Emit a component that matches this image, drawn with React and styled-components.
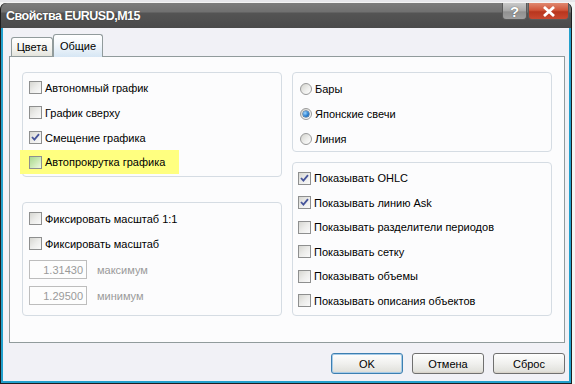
import React from "react";
import styled, { createGlobalStyle } from "styled-components";

const Global = createGlobalStyle`
  html, body { margin: 0; padding: 0; background: #f4f4f4; }
  body { font-family: "Liberation Sans", Arial, sans-serif; font-size: 11px; color: #000; }
`;

const Page = styled.div`
  width: 575px;
  height: 384px;
  padding-top: 1px;
  box-sizing: border-box;
  background: #f4f4f4;
  border-top: 2px solid #e6e6ea;
  overflow: hidden;
`;

const Window = styled.div`
  width: 572px;
  height: 381px;
  display: flex;
  flex-direction: column;
  background: #2b2b2b;
  box-sizing: border-box;
  border: 1px solid #1e1e1e;
  border-top: none;
  border-radius: 6px 6px 0 0;
`;

const TitleBar = styled.div`
  height: 25px;
  flex: none;
  display: flex;
  align-items: flex-start;
  justify-content: space-between;
  padding-left: 5px;
  border-radius: 6px 6px 0 0;
  background: linear-gradient(#7c7c7c 0%, #707070 36%, #545454 40%, #4a4a4a 100%);
`;

const Title = styled.div`
  color: #fff;
  font-weight: bold;
  font-size: 12.5px;
  letter-spacing: -0.5px;
  line-height: 13px;
  margin-top: 7px;
  text-shadow: 0 0 1px rgba(0, 0, 0, 0.4);
`;

const Caps = styled.div`
  display: flex;
  gap: 1px;
  margin-right: 2px;
`;

const CapButton = styled.div`
  height: 17px;
  width: ${(p) => p.$w}px;
  box-sizing: border-box;
  border: 1px solid #5a5a5a;
  border-top: none;
  border-radius: 0 0 4px 4px;
  display: flex;
  align-items: center;
  justify-content: center;
  color: #fff;
  font-weight: bold;
  font-size: 15px;
  background: ${(p) =>
    p.$red
      ? "linear-gradient(#e08870 0%, #d0553a 45%, #b8361e 55%, #c84830 100%)"
      : "linear-gradient(#c9c9c9 0%, #a8a8a8 50%, #909090 55%, #a0a0a0 100%)"};
  text-shadow: 0 0 1px #333;
`;

const Client = styled.div`
  flex: 1;
  display: flex;
  flex-direction: column;
  background: #f1f1f6;
  border: 2px solid #22a0cc;
  border-top: none;
  padding: 6px 3px 0 6px;
`;

const Tabs = styled.div`
  display: flex;
  align-items: flex-end;
  height: 22px;
  padding-left: 2px;
  position: relative;
  z-index: 1;
`;

const Tab = styled.div`
  height: ${(p) => (p.$active ? 23 : 19)}px;
  width: ${(p) => p.$w}px;
  justify-content: center;
  box-sizing: border-box;
  display: flex;
  align-items: center;
  font-size: 11px;
  border: 1px solid #919b9c;
  border-bottom: none;
  border-radius: 3px 3px 0 0;
  margin-bottom: ${(p) => (p.$active ? -1 : 0)}px;
  background: ${(p) =>
    p.$active
      ? "linear-gradient(#ffffff 0%, #f4f8fc 40%, #d6e6f4 100%)"
      : "linear-gradient(#ffffff 0%, #f3f3ef 60%, #e3e3dc 100%)"};
`;

const Panel = styled.div`
  height: 287px;
  box-sizing: border-box;
  border: 1px solid #919b9c;
  background: #fcfcfd;
  padding: 15px 12px 0 12px;
  display: grid;
  grid-template-columns: 260px 260px;
  column-gap: 10px;
  margin-right: 1px;
`;

const Column = styled.div`
  display: flex;
  flex-direction: column;
  gap: ${(p) => p.$gap}px;
`;

const Group = styled.div`
  height: ${(p) => p.$h}px;
  box-sizing: border-box;
  border: 1px solid #d5dce3;
  border-radius: 4px;
  padding: ${(p) => p.$pt}px 0 0 ${(p) => p.$pl}px;
  display: flex;
  flex-direction: column;
`;

const Row = styled.div`
  height: ${(p) => p.$h || 25}px;
  display: flex;
  align-items: center;
  gap: 3px;
  flex: none;
`;

const Highlight = styled(Row)`
  background: #ffff80;
  width: 150px;
  height: 24px;
  margin-left: -9px;
  padding-left: 9px;
  position: relative;
`;

const Box = styled.span`
  width: 13px;
  height: 13px;
  box-sizing: border-box;
  flex: none;
  border: 1px solid #8e8f8f;
  display: flex;
  align-items: center;
  justify-content: center;
  background: ${(p) =>
    p.$hover
      ? "linear-gradient(135deg, #a9d88f 0%, #cbe9b4 50%, #eef8e2 100%)"
      : "linear-gradient(135deg, #d6d6d1 0%, #ececea 50%, #fafafa 100%)"};
`;

const RadioDot = styled.span`
  width: 12px;
  height: 12px;
  box-sizing: border-box;
  border-radius: 50%;
  flex: none;
  border: 1px solid #9a9a9a;
  display: flex;
  align-items: center;
  justify-content: center;
  background: linear-gradient(135deg, #d2d2cc 0%, #eeeeec 55%, #ffffff 100%);
`;

const Dot = styled.span`
  width: 6px;
  height: 6px;
  border-radius: 50%;
  background: radial-gradient(circle at 35% 35%, #9fd6ff 0%, #2a7fd0 55%, #0d4f98 100%);
  box-shadow: 0 0 0 0.5px #1b4b80;
`;

const Label = styled.span`
  white-space: nowrap;
  color: ${(p) => (p.$dim ? "#9a9a9a" : "#000")};
`;

const Field = styled.div`
  width: 58px;
  height: 19px;
  box-sizing: border-box;
  border: 1px solid #bdbdbd;
  background: #fdfdfd;
  color: #9a9a9a;
  display: flex;
  align-items: center;
  justify-content: flex-end;
  padding-right: 3px;
  flex: none;
`;

const FieldRow = styled.div`
  height: 19px;
  display: flex;
  align-items: center;
  gap: 10px;
  margin-top: ${(p) => p.$mt}px;
`;

const Footer = styled.div`
  display: flex;
  justify-content: flex-end;
  gap: 9px;
  padding: 10px 1px 0 0;
`;

const Button = styled.div`
  width: 72px;
  height: 21px;
  box-sizing: border-box;
  border: 1px solid ${(p) => (p.$focus ? "#3c7fb1" : "#707070")};
  border-radius: 3px;
  display: flex;
  align-items: center;
  justify-content: center;
  font-size: 11px;
  background: linear-gradient(#fefefe 0%, #f0f0ee 50%, #e2e2dd 90%, #d6d0c5 100%);
  box-shadow: ${(p) => (p.$focus ? "inset 0 0 0 1px #a6cbe8" : "none")};
`;

const Check = ({ on, hover }) => (
  <Box $hover={hover}>
    {on && (
      <svg width="9" height="9" viewBox="0 0 9 9">
        <path d="M1 4 L3.4 6.6 L8 1.2" fill="none" stroke="#46549a" strokeWidth="1.8" />
      </svg>
    )}
  </Box>
);

const Radio = ({ on }) => <RadioDot>{on && <Dot />}</RadioDot>;

const chartItems = [
  { label: "Автономный график" },
  { label: "График сверху" },
  { label: "Смещение графика", on: true },
];

const showItems = [
  { label: "Показывать OHLC", on: true },
  { label: "Показывать линию Ask", on: true },
  { label: "Показывать разделители периодов" },
  { label: "Показывать сетку" },
  { label: "Показывать объемы" },
  { label: "Показывать описания объектов" },
];

const types = [
  { label: "Бары" },
  { label: "Японские свечи", on: true },
  { label: "Линия" },
];

export default function App() {
  return (
    <Page>
      <Global />
      <Window>
        <TitleBar>
          <Title>Свойства EURUSD,M15</Title>
          <Caps>
            <CapButton $w={25}>?</CapButton>
            <CapButton $w={41} $red>
              <svg width="14" height="11" viewBox="0 0 14 11">
                <path d="M2 1 L12 10 M12 1 L2 10" stroke="#fff" strokeWidth="2.8" />
              </svg>
            </CapButton>
          </Caps>
        </TitleBar>
        <Client>
          <Tabs>
            <Tab $w={42}>Цвета</Tab>
            <Tab $w={50} $active>Общие</Tab>
          </Tabs>
          <Panel>
            <Column $gap={25}>
              <Group $h={105} $pt={2} $pl={6}>
                {chartItems.map((it) => (
                  <Row key={it.label}>
                    <Check on={it.on} />
                    <Label>{it.label}</Label>
                  </Row>
                ))}
                <Highlight>
                  <Check hover />
                  <Label>Автопрокрутка графика</Label>
                </Highlight>
              </Group>
              <Group $h={114} $pt={3} $pl={6}>
                <Row>
                  <Check />
                  <Label>Фиксировать масштаб 1:1</Label>
                </Row>
                <Row>
                  <Check />
                  <Label>Фиксировать масштаб</Label>
                </Row>
                <FieldRow $mt={4}>
                  <Field>1.31430</Field>
                  <Label $dim>максимум</Label>
                </FieldRow>
                <FieldRow $mt={7}>
                  <Field>1.29500</Field>
                  <Label $dim>минимум</Label>
                </FieldRow>
              </Group>
            </Column>
            <Column $gap={10}>
              <Group $h={80} $pt={3} $pl={7}>
                {types.map((it) => (
                  <Row key={it.label}>
                    <Radio on={it.on} />
                    <Label>{it.label}</Label>
                  </Row>
                ))}
              </Group>
              <Group $h={154} $pt={3} $pl={5}>
                {showItems.map((it) => (
                  <Row key={it.label} $h={24.5}>
                    <Check on={it.on} />
                    <Label>{it.label}</Label>
                  </Row>
                ))}
              </Group>
            </Column>
          </Panel>
          <Footer>
            <Button $focus>OK</Button>
            <Button>Отмена</Button>
            <Button>Сброс</Button>
          </Footer>
        </Client>
      </Window>
    </Page>
  );
}
